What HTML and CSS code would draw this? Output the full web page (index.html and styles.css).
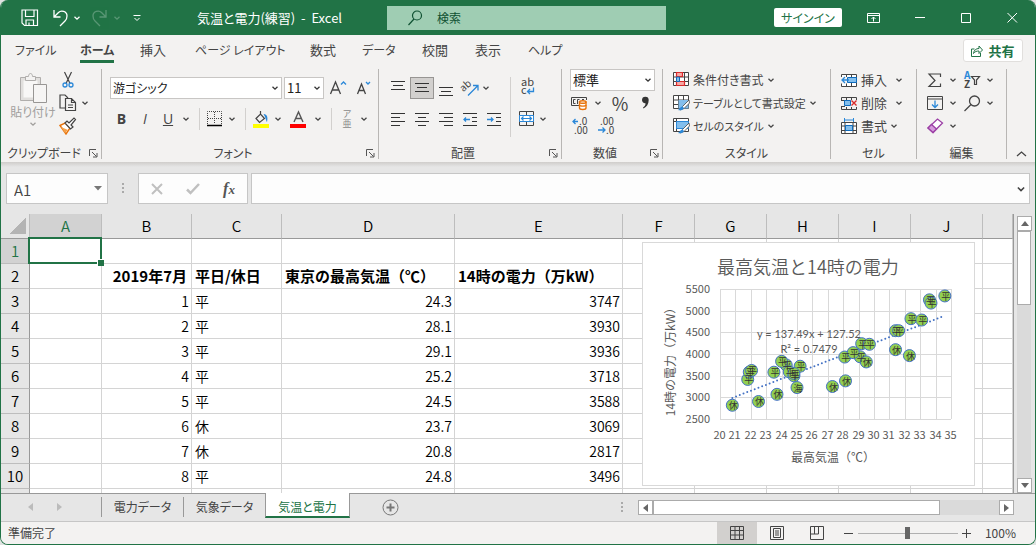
FILE: index.html
```html
<!DOCTYPE html>
<html lang="ja">
<head>
  <meta charset="UTF-8" />
  <meta name="viewport" content="width=device-width, initial-scale=1.0"/>
  <title>気温と電力(練習) - Excel</title>
  <link rel="stylesheet" href="styles.css">
</head>
<body>

<svg class="sprite" aria-hidden="true">
  <symbol id="chev" viewBox="0 0 8 8"><path d="M1.5 2.8 4 5.2 6.5 2.8" fill="none" stroke="currentColor" stroke-width="1.3"/></symbol>
  <symbol id="launch" viewBox="0 0 9 9"><path d="M.5 7V.5H7M3 3l4.5 4.5M8 4v4H4" fill="none" stroke="#555"/></symbol>
</svg>

<div class="app">
  <header class="titlebar">
    <div class="quick-access">
      <button class="tb-btn" aria-label="上書き保存"><svg width="18" height="18" viewBox="0 0 18 18" fill="none" stroke="#fff" stroke-width="1.2"><path d="M1 1h15.500v15.500H3.500L1 14zM4.500 1v6.500h8.500V1M5 16.500v-5.500h7.500v5.500M8 13.500v3"/></svg></button>
      <button class="tb-btn" aria-label="元に戻す"><svg width="18" height="18" viewBox="0 0 18 18" fill="none" stroke="#fff" stroke-width="1.300"><path d="M3 1v7h6.500M3 8l4.500-4.500C10 1 16 2 16 7c0 2.500-1 4-2 5l-5 5"/></svg></button>
      <button class="tb-drop" aria-label="元に戻す一覧"><svg width="8" height="8"><use href="#chev"/></svg></button>
      <button class="tb-btn dim" aria-label="やり直し"><svg width="18" height="18" viewBox="0 0 18 18" fill="none" stroke="#fff" stroke-width="1.300"><path d="M15 1v7H8.500M15 8l-4.500-4.500C8 1 2 2 2 7c0 2.500 1 4 2 5l5 5"/></svg></button>
      <button class="tb-drop dim" aria-label="やり直し一覧"><svg width="8" height="8"><use href="#chev"/></svg></button>
      <button class="tb-btn custom" aria-label="カスタマイズ"><svg width="8" height="8" viewBox="0 0 8 8" fill="none" stroke="#fff"><path d="M.5 1.500h7M1.500 4 4 6.500 6.500 4"/></svg></button>
    </div>
    <h1 class="doc-title">気温と電力(練習)&nbsp; -&nbsp; Excel</h1>
    <label class="search">
      <svg width="14" height="16" viewBox="0 0 14 16" fill="none" stroke="#0f5132" stroke-width="1.200"><circle cx="9" cy="5.500" r="4.500"/><path d="M6 9 .5 15"/></svg>
      <input type="text" placeholder="検索" aria-label="検索">
    </label>
    <div class="window-controls">
      <button class="sign-in">サインイン</button>
      <button class="win-btn" aria-label="リボンの表示オプション"><svg width="14" height="12" viewBox="0 0 14 12" fill="none" stroke="#fff"><path d="M.5 1.500h12v9H.5zM.5 3.500h12M6.500 9.500V5M4.500 7l2-2 2 2"/></svg></button>
      <button class="win-btn" aria-label="最小化"><svg width="11" height="11" viewBox="0 0 11 11"><path d="M0 5.500h10" stroke="#fff"/></svg></button>
      <button class="win-btn" aria-label="最大化"><svg width="11" height="11" viewBox="0 0 11 11"><path d="M.5 1.500h9v9h-9z" stroke="#fff" fill="none"/></svg></button>
      <button class="win-btn" aria-label="閉じる"><svg width="11" height="11" viewBox="0 0 11 11"><path d="M.5 1l9.500 9.500M10 1 .5 10.500" stroke="#fff"/></svg></button>
    </div>
  </header>

  <nav class="menu">
    <div class="menu-tabs">
      <a href="#" class="kana">ファイル</a>
      <a href="#" class="kana active">ホーム</a>
      <a href="#">挿入</a>
      <a href="#" class="kana">ページ レイアウト</a>
      <a href="#">数式</a>
      <a href="#" class="kana">データ</a>
      <a href="#">校閲</a>
      <a href="#">表示</a>
      <a href="#" class="kana">ヘルプ</a>
    </div>
    <button class="share"><svg width="12" height="12" viewBox="0 0 12 12" fill="none" stroke="#217346"><path d="M3.500 4H.5v7.500h9V8M2.500 8.500C3 5 5 3.500 8 3.500V1l3.500 4L8 8.500V6C5.500 6 4 6.500 2.500 8.500z"/></svg>共有</button>
  </nav>

  <section class="ribbon">
    <div class="group">
      <div class="group-body clipboard">
        <button class="paste">
          <svg width="28" height="32" viewBox="0 0 28 32" fill="none" stroke="#b0aeac"><path d="M1.500 5.500h20v23h-20z" fill="#e1dfdd"/><path d="M4.500 8.500h14v17h-14z" fill="#f8f7f6" stroke="none"/><path d="M6.500 8.500v-4h3c0-4 4-4 4 0h3v4z" fill="#f3f2f1"/><path d="M14.500 12.500h13v18h-13z" fill="#f6f5f4" stroke="#989694"/></svg>
          <span>貼り付け</span>
          <svg width="8" height="8"><use href="#chev"/></svg>
        </button>
        <div class="rows">
          <button class="tool" aria-label="切り取り"><svg width="16" height="18" viewBox="0 0 16 18" fill="none"><path d="M4.500 1 10 12.500M11.500 1 6 12.500" stroke="#444" stroke-width="1.200"/><circle cx="5" cy="14" r="2" stroke="#2b88d8" stroke-width="1.300"/><circle cx="11" cy="14" r="2" stroke="#2b88d8" stroke-width="1.300"/></svg></button><i></i>
          <button class="tool" aria-label="コピー"><svg width="18" height="18" viewBox="0 0 18 18" fill="none" stroke="#444" stroke-width="1.200"><path d="M6 14H1V1h5l3 3M6.500 4.500h6l4 4v8h-10zM12.500 4.500v4h4M9 11h5M9 13.500h5"/></svg></button>
          <button class="drop" aria-label="コピーのオプション"><svg width="8" height="8"><use href="#chev"/></svg></button>
          <button class="tool" aria-label="書式のコピー"><svg width="18" height="18" viewBox="0 0 18 18"><path d="M1 8.500 6 6l5 5-4 6z" fill="#fff" stroke="#e8740c" stroke-width="1.400"/><path d="M2 10l7 3-3 3z" fill="#f4a14a"/><path d="M6 6l2-2 2 2 5-5 1.500 1.500L12 8l2 2-2.500 2z" fill="#fff" stroke="#444" stroke-width="1.200"/></svg></button>
        </div>
      </div>
      <div class="group-label kana">クリップボード<button class="launcher" aria-label="クリップボードの設定"><svg width="9" height="9"><use href="#launch"/></svg></button></div>
    </div>

    <div class="group">
      <div class="group-body font">
        <div class="font-pick">
          <select class="font-name" aria-label="フォント名"><option>游ゴシック</option></select>
          <select class="font-size" aria-label="フォントサイズ"><option>11</option></select>
          <button class="tool" aria-label="拡大"><svg width="18" height="16" viewBox="0 0 18 16" fill="none"><path d="M1.500 14 6.500 2l5 12M3.200 10h6.600" stroke="#444" stroke-width="1.300"/><path d="M12 4.500l2.500-2.500L17 4.500" stroke="#2b88d8" stroke-width="1.300"/></svg></button>
          <button class="tool" aria-label="縮小"><svg width="16" height="16" viewBox="0 0 16 16" fill="none"><path d="M1.500 14 5.500 4l4 10M3 10.500h5" stroke="#444" stroke-width="1.300"/><path d="M10 2l2 2 2-2" stroke="#2b88d8" stroke-width="1.300"/></svg></button>
        </div>
        <div class="font-style">
          <button class="tool letter bold">B</button>
          <button class="tool letter italic">I</button>
          <button class="tool letter underline">U</button>
          <button class="drop" aria-label="下線の種類"><svg width="8" height="8"><use href="#chev"/></svg></button>
          <span class="sep"></span>
          <button class="tool" aria-label="罫線"><svg width="16" height="16" viewBox="0 0 16 16" fill="none" stroke="#444"><path d="M.5 13V.5h14V13M7.500 1v12M1 7.500h13" stroke-dasharray="1 1"/><path d="M0 14.500h15" stroke="#000" stroke-width="1.500"/></svg></button>
          <button class="drop" aria-label="罫線の種類"><svg width="8" height="8"><use href="#chev"/></svg></button>
          <span class="sep"></span>
          <button class="tool" aria-label="塗りつぶし"><svg width="17" height="17" viewBox="0 0 17 17" fill="none"><path d="M7.500 0v3.500M3 7.500 7.500 3l4 4.500-5 4z" stroke="#444" stroke-width="1.200"/><path d="M10.500 3c4 0 4.500 4 3.500 8-1-1-1-4-3.500-8z" fill="#2b88d8"/><path d="M0 13h16v4H0z" fill="#ff0"/></svg></button>
          <button class="drop" aria-label="塗りつぶしの色"><svg width="8" height="8"><use href="#chev"/></svg></button>
          <button class="tool" aria-label="フォントの色"><svg width="17" height="17" viewBox="0 0 17 17" fill="none"><path d="M4 11 8.500 1 13 11M5.500 7.500h6" stroke="#555" stroke-width="1.400"/><path d="M0 13h16v4H0z" fill="red"/></svg></button>
          <button class="drop" aria-label="フォントの色一覧"><svg width="8" height="8"><use href="#chev"/></svg></button>
          <span class="sep"></span>
          <button class="tool ruby"><span>ア</span><span>亜</span></button>
          <button class="drop" aria-label="ふりがな"><svg width="8" height="8"><use href="#chev"/></svg></button>
        </div>
      </div>
      <div class="group-label kana">フォント<button class="launcher" aria-label="フォントの設定"><svg width="9" height="9"><use href="#launch"/></svg></button></div>
    </div>

    <div class="group">
      <div class="group-body align">
        <button class="tool" aria-label="上揃え"><svg width="14" height="16" viewBox="0 0 14 16" stroke="#333"><path d="M0 1.500h14M2 5.500h10M0 9.500h14"/></svg></button>
        <button class="tool pressed" aria-label="上下中央揃え"><svg width="14" height="16" viewBox="0 0 14 16" stroke="#333"><path d="M0 3.500h14M2 7.500h10M0 11.500h14"/></svg></button>
        <button class="tool" aria-label="下揃え"><svg width="14" height="16" viewBox="0 0 14 16" stroke="#333"><path d="M0 7.500h14M2 11.500h10M0 15.500h14"/></svg></button>
        <button class="tool" aria-label="方向"><svg width="17" height="17" viewBox="0 0 17 17"><text x="0" y="9" font-size="10" fill="#444" transform="rotate(-42 5 9)">ab</text><path d="M6 15.500 15.500 6M11 5.500h5v5" fill="none" stroke="#2b88d8" stroke-width="1.300"/></svg></button>
        <button class="drop" aria-label="方向の種類"><svg width="8" height="8"><use href="#chev"/></svg></button>
        <span class="sep tall"></span>
        <button class="tool wrap" aria-label="折り返して全体を表示する"><svg width="16" height="18" viewBox="0 0 16 18"><text x="2" y="7" font-size="11" fill="#444">ab</text><text x="2" y="15" font-size="11" fill="#444">c</text><path d="M14.500 8.500v4H8.500M11 10l-2.500 2.500L11 15" fill="none" stroke="#2b88d8" stroke-width="1.300"/></svg></button>
        <button class="tool second-row" aria-label="左揃え"><svg width="14" height="15" viewBox="0 0 14 15" stroke="#333"><path d="M0 1.500h14M0 5.500h9M0 9.500h14M0 13.500h9"/></svg></button>
        <button class="tool center" aria-label="中央揃え"><svg width="14" height="15" viewBox="0 0 14 15" stroke="#333"><path d="M0 1.500h14M3 5.500h8M0 9.500h14M3 13.500h8"/></svg></button>
        <button class="tool" aria-label="右揃え"><svg width="14" height="15" viewBox="0 0 14 15" stroke="#333"><path d="M0 1.500h14M5 5.500h9M0 9.500h14M5 13.500h9"/></svg></button>
        <button class="tool" aria-label="インデントを減らす"><svg width="15" height="15" viewBox="0 0 15 15" fill="none"><path d="M0 1.500h14M9 5.500h5M9 9.500h5M0 13.500h14" stroke="#333"/><path d="M1 7.500h6M3 5.500l-2 2 2 2" stroke="#2b88d8" stroke-width="1.300"/></svg></button>
        <button class="tool" aria-label="インデントを増やす"><svg width="15" height="15" viewBox="0 0 15 15" fill="none"><path d="M0 1.500h14M9 5.500h5M9 9.500h5M0 13.500h14" stroke="#333"/><path d="M0 7.500h6M4 5.500l2 2-2 2" stroke="#2b88d8" stroke-width="1.300"/></svg></button>
        <button class="tool merge" aria-label="セルを結合して中央揃え"><svg width="16" height="16" viewBox="0 0 16 16" fill="none"><path d="M.5.5h14v14H.5zM7.500 0v4M7.500 11v4" stroke="#444"/><path d="M.5 4.500h14v6H.5z" fill="#fff" stroke="#2b88d8"/><path d="M2.500 7.500h10M4.500 5.500l-2 2 2 2M10.500 5.500l2 2-2 2" stroke="#2b88d8" stroke-width="1.200"/></svg></button>
        <button class="drop" aria-label="結合の種類"><svg width="8" height="8"><use href="#chev"/></svg></button>
      </div>
      <div class="group-label">配置<button class="launcher" aria-label="配置の設定"><svg width="9" height="9"><use href="#launch"/></svg></button></div>
    </div>

    <div class="group">
      <div class="group-body number">
        <select aria-label="表示形式"><option>標準</option></select>
        <div class="num-row">
          <button class="tool" aria-label="通貨表示形式"><svg width="18" height="16" viewBox="0 0 18 16" fill="none"><path d="M8 10.500H.5v-8h15V5" stroke="#444"/><path d="M4.500 4.500H2.500v4h2M6.500 9V4.500h2M11 4.500h2" stroke="#444"/><path d="M8.500 7v6c0 2 6.500 2 6.500 0V7z" fill="#fff" stroke="#e8740c" stroke-width="1.400"/><ellipse cx="11.700" cy="7" rx="3.200" ry="1.300" fill="#fff" stroke="#e8740c" stroke-width="1.400"/><path d="M8.500 10c0 1.500 6.500 1.500 6.500 0" stroke="#e8740c" stroke-width="1.400"/></svg></button>
          <button class="drop" aria-label="通貨の種類"><svg width="8" height="8"><use href="#chev"/></svg></button>
          <button class="tool percent">%</button>
          <button class="tool" aria-label="桁区切り"><svg width="9" height="14" viewBox="0 0 9 14"><path d="M1 4a3.300 3.300 0 0 1 6.700 0c0 4-2 7-5.200 8.500L2 11.500c2-1.500 2.500-2.500 2.500-4.200C2.500 7.500 1 6 1 4z" fill="#333"/></svg></button>
        </div>
        <div class="num-row wide">
          <button class="tool" aria-label="小数点以下の表示桁数を増やす"><svg width="18" height="18" viewBox="0 0 18 18"><text x="7" y="8" font-size="10" fill="#444">.0</text><text x="2" y="17" font-size="10" fill="#444">.00</text><path d="M6 4.500H1M3.500 2 1 4.500 3.500 7" fill="none" stroke="#2b88d8" stroke-width="1.300"/></svg></button>
          <button class="tool" aria-label="小数点以下の表示桁数を減らす"><svg width="18" height="18" viewBox="0 0 18 18"><text x="3" y="8" font-size="10" fill="#444">.00</text><text x="9" y="17" font-size="10" fill="#444">.0</text><path d="M1 13h7M5.500 10.500 8 13l-2.500 2.500" fill="none" stroke="#2b88d8" stroke-width="1.300"/></svg></button>
        </div>
      </div>
      <div class="group-label">数値<button class="launcher" aria-label="数値の設定"><svg width="9" height="9"><use href="#launch"/></svg></button></div>
    </div>

    <div class="group">
      <div class="group-body styles">
        <button class="text-tool"><svg width="17" height="16" viewBox="0 0 17 16"><path d="M.5.500h15v13H.5zM0 5h16M0 9.500h16M3.500 0v14M11.500 0v14" fill="#fff" stroke="#444"/><path d="M3.500.500h6v4h-6zM3.500 9.500h8v4h-8z" fill="#f7a8a4" stroke="#d92c2c" stroke-width="1.200"/><path d="M3.500 5h3v4.500h-3z" fill="#83beec" stroke="#0f6cbd"/></svg>条件付き書式<svg width="8" height="8"><use href="#chev"/></svg></button>
        <button class="text-tool long"><svg width="17" height="16" viewBox="0 0 17 16"><path d="M.5.500h15v13H.5zM0 5h16M0 9.500h16M5.500 0v14M10.500 0v14" fill="#fff" stroke="#444"/><path d="M5.500 5h10v8.500h-10z" fill="#83beec"/><path d="M16 5 9.500 11.500 7 15l4-1.500L16.500 8z" fill="#fff" stroke="#444" stroke-width=".8"/><path d="M9.500 11.500 11 13c-1 2.500-4 2.500-6 2 2-1 2-3 4.500-3.500z" fill="#2b88d8"/></svg>テーブルとして書式設定<svg width="8" height="8"><use href="#chev"/></svg></button>
        <button class="text-tool long"><svg width="17" height="16" viewBox="0 0 17 16"><path d="M.5.500h15v13H.5zM0 3.500h16M3.500 0v14" fill="#fff" stroke="#444"/><path d="M3.500 3.500h12v7h-12z" fill="#83beec" stroke="#2b88d8"/><path d="M16 5 9.500 11.500 7 15l4-1.500L16.500 8z" fill="#fff" stroke="#444" stroke-width=".8"/><path d="M9.500 11.500 11 13c-1 2.500-4 2.500-6 2 2-1 2-3 4.500-3.500z" fill="#2b88d8"/></svg>セルのスタイル<svg width="8" height="8"><use href="#chev"/></svg></button>
      </div>
      <div class="group-label kana">スタイル</div>
    </div>

    <div class="group">
      <div class="group-body cells">
        <button class="text-tool"><svg width="17" height="15" viewBox="0 0 17 15"><path d="M.5 1.500h15v12H.5zM5.500 1v13M10.500 1v13" fill="#fff" stroke="#444"/><path d="M6.500 4.500h9v5h-9z" fill="#83beec" stroke="#0f6cbd"/><path d="M0 4h6v6.500H0z" fill="#f3f2f1"/><path d="M8 7H1M4 4 1 7l3 3" fill="none" stroke="#2b88d8" stroke-width="1.300"/></svg>挿入<svg width="8" height="8"><use href="#chev"/></svg></button>
        <button class="text-tool"><svg width="17" height="15" viewBox="0 0 17 15"><path d="M.5 4V1.500h15V4M.5 11v2.500h15V11M5.500 1v3M10.500 1v3M5.500 11v3M10.500 11v3M0 4.500h4M0 10.500h4" fill="none" stroke="#444"/><path d="M3.500 4.500h6v5h-6z" fill="#83beec" stroke="#0f6cbd"/><path d="M10.500 4.500l5 5M15.500 4.500l-5 5" stroke="#d92c2c" stroke-width="1.400"/></svg>削除<svg width="8" height="8"><use href="#chev"/></svg></button>
        <button class="text-tool near"><svg width="17" height="17" viewBox="0 0 17 17"><path d="M.5 4.500h15v11H.5zM4 4v12M12 4v12M0 8h16M0 12.500h16" fill="#fff" stroke="#444"/><path d="M4.500 7.500h7v5h-7z" fill="#83beec" stroke="#0f6cbd"/><path d="M3.500 0v4M12.500 0v4M4 2h8" stroke="#2b88d8"/></svg>書式<svg width="8" height="8"><use href="#chev"/></svg></button>
      </div>
      <div class="group-label kana">セル</div>
    </div>

    <div class="group">
      <div class="group-body edit">
        <button class="tool" aria-label="オート SUM"><svg width="14" height="15" viewBox="0 0 14 15"><path d="M12.500 4V1H1l6 6.500L1 13.500h11.500v-3" fill="none" stroke="#444" stroke-width="1.200"/></svg></button>
        <button class="drop" aria-label="集計の種類"><svg width="8" height="8"><use href="#chev"/></svg></button>
        <button class="tool" aria-label="並べ替えとフィルター"><svg width="18" height="18" viewBox="0 0 18 18"><text x="1" y="8" font-size="10" font-weight="700" fill="#2b88d8">A</text><text x="1" y="17" font-size="10" font-weight="700" fill="#444">Z</text><path d="M8.500 5.500h8L13.500 9v4.500h-2V9z" fill="none" stroke="#444" stroke-width="1.200"/></svg></button>
        <button class="drop" aria-label="並べ替えの種類"><svg width="8" height="8"><use href="#chev"/></svg></button>
        <button class="tool" aria-label="フィル"><svg width="16" height="14" viewBox="0 0 16 14"><path d="M.5.500h15v13H.5zM.5 3h15" fill="none" stroke="#444"/><path d="M8 4.500v7M5 8.500l3 3 3-3" fill="none" stroke="#2b88d8" stroke-width="1.300"/></svg></button>
        <button class="drop" aria-label="フィルの種類"><svg width="8" height="8"><use href="#chev"/></svg></button>
        <button class="tool" aria-label="検索と選択"><svg width="17" height="17" viewBox="0 0 17 17" fill="none" stroke="#444" stroke-width="1.300"><circle cx="10.500" cy="6" r="5"/><path d="M7 9.500.5 16"/></svg></button>
        <button class="drop" aria-label="検索の種類"><svg width="8" height="8"><use href="#chev"/></svg></button>
        <button class="tool" aria-label="クリア"><svg width="17" height="16" viewBox="0 0 17 16"><path d="M1 10 10.500 1l5 4-9.500 9.500z" fill="#fff" stroke="#9b3fa5" stroke-width="1.300"/><path d="M1 10l3.500-3.500L9.500 11 6 14.500z" fill="#d59bdc" stroke="#9b3fa5" stroke-width="1.300"/></svg></button>
        <button class="drop" aria-label="クリアの種類"><svg width="8" height="8"><use href="#chev"/></svg></button>
      </div>
      <div class="group-label">編集</div>
    </div>
    <button class="collapse" aria-label="リボンを折りたたむ"><svg width="11" height="8" viewBox="0 0 11 8"><path d="M1 6l4.500-4L10 6" fill="none" stroke="#444" stroke-width="1.300"/></svg></button>
  </section>

  <section class="formula-bar">
    <label class="name-box"><input type="text" value="A1" aria-label="名前ボックス"><svg width="8" height="5" viewBox="0 0 8 5"><path d="M0 0h8L4 4.500z" fill="#777"/></svg></label>
    <span class="dots"></span>
    <div class="fx-buttons">
      <button aria-label="キャンセル"><svg width="12" height="12" viewBox="0 0 12 12"><path d="M1 1l10 10M11 1 1 11" stroke="#c0c0c0" stroke-width="2"/></svg></button>
      <button aria-label="入力"><svg width="14" height="12" viewBox="0 0 14 12"><path d="M1 6.500 4.500 10 13 1" fill="none" stroke="#c0c0c0" stroke-width="2.500"/></svg></button>
      <button class="fx" aria-label="関数の挿入">f<small>x</small></button>
    </div>
    <label class="formula"><input type="text" aria-label="数式バー"><svg width="10" height="10"><use href="#chev"/></svg></label>
  </section>

  <main class="workspace">
    <div class="sheet">
      <table>
        <colgroup>
          <col class="c-head"><col class="c-72"><col class="c-90"><col class="c-90"><col class="c-173"><col class="c-168">
          <col class="c-72"><col class="c-72"><col class="c-72"><col class="c-72"><col class="c-72"><col>
        </colgroup>
        <thead>
          <tr><th class="corner"></th><th class="sel">A</th><th>B</th><th>C</th><th>D</th><th>E</th><th>F</th><th>G</th><th>H</th><th>I</th><th>J</th><th></th></tr>
        </thead>
        <tbody>
          <tr><th class="sel">1</th><td class="cursor"></td><td></td><td></td><td></td><td></td><td></td><td></td><td></td><td></td><td></td><td></td></tr>
          <tr class="heading"><th>2</th><td></td><td class="date">2019年7月</td><td>平日/休日</td><td>東京の最高気温（℃）</td><td>14時の電力（万kW）</td><td></td><td></td><td></td><td></td><td></td><td></td></tr>
          <tr><th>3</th><td></td><td class="num">1</td><td>平</td><td class="num">24.3</td><td class="num">3747</td><td></td><td></td><td></td><td></td><td></td><td></td></tr>
          <tr><th>4</th><td></td><td class="num">2</td><td>平</td><td class="num">28.1</td><td class="num">3930</td><td></td><td></td><td></td><td></td><td></td><td></td></tr>
          <tr><th>5</th><td></td><td class="num">3</td><td>平</td><td class="num">29.1</td><td class="num">3936</td><td></td><td></td><td></td><td></td><td></td><td></td></tr>
          <tr><th>6</th><td></td><td class="num">4</td><td>平</td><td class="num">25.2</td><td class="num">3718</td><td></td><td></td><td></td><td></td><td></td><td></td></tr>
          <tr><th>7</th><td></td><td class="num">5</td><td>平</td><td class="num">24.5</td><td class="num">3588</td><td></td><td></td><td></td><td></td><td></td><td></td></tr>
          <tr><th>8</th><td></td><td class="num">6</td><td>休</td><td class="num">23.7</td><td class="num">3069</td><td></td><td></td><td></td><td></td><td></td><td></td></tr>
          <tr><th>9</th><td></td><td class="num">7</td><td>休</td><td class="num">20.8</td><td class="num">2817</td><td></td><td></td><td></td><td></td><td></td><td></td></tr>
          <tr><th>10</th><td></td><td class="num">8</td><td>平</td><td class="num">24.8</td><td class="num">3496</td><td></td><td></td><td></td><td></td><td></td><td></td></tr>
          <tr><th></th><td></td><td></td><td></td><td></td><td></td><td></td><td></td><td></td><td></td><td></td><td></td></tr>
        </tbody>
      </table>
      <figure class="chart">
        <svg id="scatter" width="331" height="242" viewBox="0 0 331 242" role="img" aria-label="最高気温と14時の電力"></svg>
      </figure>
    </div>
    <div class="v-scroll">
      <button aria-label="上へ"><svg width="8" height="5" viewBox="0 0 8 5"><path d="M0 5h8L4 0z" fill="#666"/></svg></button>
      <div class="v-track"><div class="v-thumb"></div></div>
      <button aria-label="下へ"><svg width="8" height="5" viewBox="0 0 8 5"><path d="M0 0h8L4 5z" fill="#666"/></svg></button>
    </div>
  </main>

  <nav class="sheet-bar">
    <div class="sheet-nav">
      <button aria-label="前のシート"><svg width="5" height="8" viewBox="0 0 5 8"><path d="M5 0v8L0 4z" fill="#bbb"/></svg></button>
      <button aria-label="次のシート"><svg width="5" height="8" viewBox="0 0 5 8"><path d="M0 0v8l5-4z" fill="#bbb"/></svg></button>
    </div>
    <a href="#" class="sheet-tab">電力データ</a>
    <a href="#" class="sheet-tab">気象データ</a>
    <a href="#" class="sheet-tab active">気温と電力</a>
    <button class="add-sheet" aria-label="新しいシート"><svg width="17" height="17" viewBox="0 0 17 17" fill="none" stroke="#777"><circle cx="8.500" cy="8.500" r="7.500"/><path d="M8.500 4.500v8M4.500 8.500h8" stroke-width="2"/></svg></button>
    <span class="dots"></span>
    <div class="h-scroll">
      <button aria-label="左へ"><svg width="5" height="8" viewBox="0 0 5 8"><path d="M5 0v8L0 4z" fill="#666"/></svg></button>
      <div class="h-track"><div class="h-thumb"></div></div>
      <button aria-label="右へ"><svg width="5" height="8" viewBox="0 0 5 8"><path d="M0 0v8l5-4z" fill="#666"/></svg></button>
    </div>
  </nav>

  <footer class="status">
    <span class="ready">準備完了</span>
    <div class="views">
      <button class="view active" aria-label="標準"><svg width="14" height="14" viewBox="0 0 14 14" fill="none" stroke="#444"><path d="M.5.500h13v13H.5zM.5 4.500h13M.5 9h13M5 .5v13M9.500.5v13"/></svg></button>
      <button class="view" aria-label="ページ レイアウト"><svg width="14" height="14" viewBox="0 0 14 14" fill="none" stroke="#444"><path d="M.5.500h13v13H.5zM3.500 2.500h7v9h-7zM5 5h4M5 7h4M5 9h4"/></svg></button>
      <button class="view" aria-label="改ページ プレビュー"><svg width="14" height="14" viewBox="0 0 14 14" fill="none" stroke="#444"><path d="M.5.500h13v13H.5zM.5 8h8V.5M4.500.5V8"/></svg></button>
    </div>
    <button class="zoom-btn" aria-label="縮小"><svg width="9" height="9" viewBox="0 0 9 9"><path d="M0 4.500h9" stroke="#444"/></svg></button>
    <input type="range" min="0" max="100" value="50" aria-label="ズーム">
    <button class="zoom-btn" aria-label="拡大"><svg width="9" height="9" viewBox="0 0 9 9"><path d="M0 4.500h9M4.500 0v9" stroke="#444"/></svg></button>
    <span class="zoom-value">100%</span>
  </footer>
</div>

<script src="chart.js"></script>
</body>
</html>
```
FILE: styles.css
```css
* {
  box-sizing: border-box;
}

body {
  margin: 0;
  background-color: #dfe3e1;
  color: #444;
  font-family: "Noto Sans CJK JP", "Noto Sans", sans-serif;
  font-size: 13px;
  line-height: 16px;
}

button,
input,
select {
  font: inherit;
  color: inherit;
  margin: 0;
  padding: 0;
  border: 0;
  background: none;
}

a {
  color: inherit;
  text-decoration: none;
}

svg {
  display: block;
  flex: none;
  overflow: visible;
}

.sprite {
  position: absolute;
  width: 0;
  height: 0;
}

.kana {
  font-size: 12px;
  font-feature-settings: "palt";
}

.app {
  display: flex;
  flex-direction: column;
  height: 100vh;
  border: 1px solid #217346;
  border-top: 0;
  border-radius: 8px;
  overflow: hidden;
  background-color: #e6e6e6;
}

/* title bar */
.titlebar {
  display: flex;
  align-items: center;
  flex: none;
  height: 35px;
  background-color: #217346;
  color: #fff;
}

.quick-access {
  display: flex;
  align-items: center;
  width: 196px;
  padding-left: 18px;
}

.tb-btn,
.tb-drop {
  display: grid;
  place-items: center;
  height: 24px;
}

.tb-btn {
  width: 22px;
}

.tb-btn + .tb-btn {
  margin-left: 8px;
}

.tb-drop {
  width: 12px;
  margin-right: 6px;
}

.custom {
  width: 16px;
}

.dim {
  opacity: 0.25;
}

.doc-title {
  width: 190px;
  margin: 0;
  font-size: 13px;
  font-weight: 400;
  white-space: nowrap;
  font-feature-settings: "palt";
}

.search {
  display: flex;
  align-items: center;
  flex: 0 1 279px;
  gap: 15px;
  height: 24px;
  padding-left: 21px;
  background-color: #9fcdb3;
}

.search input {
  width: 100%;
  min-width: 0;
}

.search input::placeholder {
  color: #0f5132;
  opacity: 1;
  font-size: 12px;
}

.window-controls {
  display: flex;
  align-items: center;
  margin-left: auto;
}

.sign-in {
  width: 68px;
  height: 19px;
  margin-right: 9px;
  border-radius: 2px;
  background-color: #fff;
  color: #217346;
  font-size: 12px;
  font-feature-settings: "palt";
}

.win-btn {
  display: grid;
  place-items: center;
  width: 46px;
  height: 34px;
}

/* menu tabs */
.menu {
  display: flex;
  align-items: flex-start;
  justify-content: space-between;
  flex: none;
  height: 34px;
  padding: 3px 8px 0 14px;
  background-color: #f3f2f1;
}

.menu-tabs {
  display: grid;
  grid-template-columns: 65px 60px 55px 115px 52px 60px 53px 53px auto;
}

.menu-tabs a {
  justify-self: start;
  height: 25px;
  padding-top: 3px;
  line-height: 18px;
  border-bottom: 3px solid transparent;
  white-space: nowrap;
}

.menu-tabs .active {
  font-weight: 700;
  border-color: #217346;
}

.share {
  display: flex;
  align-items: center;
  justify-content: center;
  gap: 5px;
  width: 60px;
  height: 23px;
  margin: 1px 4px 0;
  border: 1px solid #e1dfdd;
  border-radius: 3px;
  background-color: #fff;
  color: #217346;
  font-weight: 700;
}

/* ribbon */
.ribbon {
  display: grid;
  grid-template-columns: 101px 277px 183px 101px 168px 86px 90px 1fr;
  flex: none;
  height: 93px;
  background-color: #f3f2f1;
}

.group {
  display: flex;
  flex-direction: column;
  height: 90px;
  border-right: 1px solid #b8b6b4;
}

.group-body {
  height: 78px;
}

.group-label {
  display: grid;
  grid-template-columns: 1fr 14px;
  align-items: center;
  height: 12px;
  line-height: 12px;
  font-size: 12px;
  text-align: center;
}

.launcher {
  padding-left: 2px;
}

.tool,
.drop {
  display: grid;
  place-items: center;
  height: 22px;
}

.sep {
  justify-self: center;
  width: 1px;
  height: 22px;
  background-color: #d2d0ce;
}

.clipboard {
  display: flex;
}

.paste {
  display: flex;
  flex-direction: column;
  align-items: center;
  width: 52px;
  margin-left: 6px;
  padding-top: 3px;
  font-size: 12px;
  color: #a19f9d;
  font-feature-settings: "palt";
}

.rows {
  display: grid;
  grid-template-columns: 18px 16px;
  grid-auto-rows: 22px;
  align-content: start;
  gap: 1px 0;
}

.font {
  padding: 8px 0 0 8px;
}

.font-pick {
  display: grid;
  grid-template-columns: 172px 40px 24px 24px;
  gap: 2px;
}

.font-style {
  display: grid;
  grid-template-columns: 23px 24px 22px 14px 12px 20px 14px 12px 20px 14px 26px 14px 12px 20px 14px;
  margin-top: 9px;
}

select {
  appearance: none;
  height: 22px;
  padding: 0 18px 0 2px;
  border: 1px solid #c8c6c4;
  background: #fff url("data:image/svg+xml,%3Csvg xmlns='http://www.w3.org/2000/svg' width='8' height='8'%3E%3Cpath d='M1.500 2.800 4 5.200 6.500 2.800' fill='none' stroke='%23333' stroke-width='1.300'/%3E%3C/svg%3E") no-repeat right 2px center;
  color: #222;
  font-feature-settings: "palt";
}

.font-name {
  font-size: 12px;
}

.letter {
  font-family: "Open Sans", "Noto Sans", sans-serif;
  font-size: 14px;
}

.bold {
  font-weight: 700;
}

.italic {
  font-style: italic;
}

.underline {
  text-decoration: underline;
}

.ruby {
  align-content: center;
  font-size: 9px;
  line-height: 10px;
  color: #888;
}

.align {
  display: grid;
  grid-template-columns: 24px 24px 24px 24px 24px 9px 24px 10px;
  grid-template-rows: 22px 22px;
  row-gap: 9px;
  padding: 8px 0 0 7px;
}

.align .drop {
  justify-self: start;
}

.align .pressed {
  border: 1px solid #979593;
  background-color: #d2d0ce;
}

.tall {
  grid-column: 6;
  grid-row: 1 / 3;
  height: 60px;
}

.second-row {
  grid-column: 1;
}

.center {
  grid-column: 2;
}

.wrap,
.merge {
  grid-column: 7;
}

.number {
  display: grid;
  align-content: start;
  gap: 1px;
  padding-left: 8px;
}

.number select {
  width: 85px;
}

.num-row {
  display: grid;
  grid-template-columns: 20px 16px 28px 22px;
}

.num-row.wide {
  grid-template-columns: 22px 28px;
}

.percent {
  font-size: 18px;
}

.styles,
.cells {
  display: grid;
  align-content: start;
  justify-items: start;
  gap: 1px;
  padding-left: 10px;
}

.text-tool {
  display: flex;
  align-items: center;
  gap: 3px;
  height: 22px;
  white-space: nowrap;
  font-feature-settings: "palt";
}

.styles .text-tool {
  font-size: 12px;
}

.styles .long {
  font-size: 11px;
}

.cells .text-tool svg:last-child {
  margin-left: 5px;
}

.cells .near svg:last-child {
  margin-left: 0;
}

.edit {
  display: grid;
  grid-template-columns: 24px 12px 26px 10px;
  grid-auto-rows: 22px;
  align-content: start;
  gap: 1px 0;
  padding-left: 6px;
}

.styles + .group-label,
.cells + .group-label,
.edit + .group-label {
  grid-template-columns: 1fr;
}

.collapse {
  display: grid;
  place-items: center;
  align-self: end;
  height: 16px;
}

/* formula bar */
.formula-bar {
  display: flex;
  flex: none;
  height: 52px;
  padding: 11px 5px 10px;
  background: linear-gradient(#cfcdcb, #e6e6e6 5px);
}

.name-box,
.formula,
.fx-buttons {
  display: flex;
  align-items: center;
  height: 31px;
  border: 1px solid #c6c6c6;
  background-color: #fdfdfd;
}

.name-box {
  width: 102px;
  padding: 0 5px 0 7px;
}

.name-box input {
  width: 80px;
  margin-top: 3px;
  font-size: 15px;
  font-weight: 350;
}

.dots {
  align-self: center;
  width: 2px;
  height: 11px;
  background: repeating-linear-gradient(#aaa 0 2px, transparent 2px 4px);
}

.formula-bar .dots {
  margin: 0 14px;
}

.fx-buttons {
  width: 110px;
  margin-right: 3px;
}

.fx-buttons button {
  display: grid;
  place-items: center;
  flex: 1;
  height: 24px;
}

.fx-buttons .fx {
  display: block;
  color: #555;
  font: italic 700 16px "Liberation Serif", serif;
}

.fx small {
  font-size: 13px;
}

.formula {
  flex: 1;
  padding-right: 3px;
}

.formula input {
  flex: 1;
  min-width: 0;
}

/* grid */
.workspace {
  display: flex;
  flex: 1;
  min-height: 0;
}

.sheet {
  position: relative;
  flex: 1;
  overflow: hidden;
  border-right: 1px solid #999;
}

table {
  width: 100%;
  table-layout: fixed;
  border-spacing: 0;
  background-color: #fff;
  color: #000;
  font-size: 14px;
  font-weight: 350;
}

.c-head { width: 29px; }
.c-72 { width: 72px; }
.c-90 { width: 90px; }
.c-168 { width: 168px; }
.c-173 { width: 173px; }

th,
td {
  height: 25px;
  padding: 0;
  white-space: nowrap;
  line-height: 20px;
}

th {
  background-color: #e6e6e6;
  border-right: 1px solid #bdbdbd;
  border-bottom: 1px solid #999;
  font-size: 15px;
  font-weight: 350;
}

tbody th {
  border-right-color: #999;
  border-bottom-color: #bdbdbd;
}

th.sel {
  background-color: #d2d2d2;
  color: #217346;
}

.corner {
  background: linear-gradient(135deg, transparent 50%, #b4b4b4 50%) 9px 4px / 16px 16px no-repeat #e6e6e6;
}

td {
  padding: 0 3px;
  border-right: 1px solid #d4d4d4;
  border-bottom: 1px solid #d4d4d4;
}

.num {
  padding-right: 2px;
  text-align: right;
}

.date {
  padding-right: 4px;
  text-align: right;
}

.heading td {
  font-size: 15px;
  font-weight: 700;
}

.cursor {
  position: relative;
}

.cursor::before {
  content: "";
  position: absolute;
  inset: -2px -1px -1px -2px;
  border: 2px solid #217346;
}

.cursor::after {
  content: "";
  position: absolute;
  right: -3px;
  bottom: -3px;
  width: 6px;
  height: 6px;
  border: 1px solid #fff;
  border-right: 0;
  border-bottom: 0;
  background-color: #217346;
}

/* floats over the cells */
.chart {
  position: absolute;
  left: 641px;
  top: 28px;
  margin: 0;
  border: 1px solid #d9d9d9;
  background-color: #fff;
}

.chart text {
  fill: #595959;
  font-size: 11px;
}

.chart .chart-title {
  font-size: 18px;
  font-weight: 350;
}

.chart .axis-title {
  font-size: 12px;
}

.chart .equation {
  font-family: Lato, sans-serif;
}

.chart .point-label {
  font-size: 9px;
  fill: #333;
}

.grid-line {
  stroke: #d9d9d9;
}

.trend {
  stroke: #4472c4;
  stroke-width: 2;
  stroke-dasharray: 0 4;
  stroke-linecap: round;
}

.point {
  fill: #92d050;
  stroke: #4472c4;
}

.v-scroll {
  display: flex;
  flex-direction: column;
  width: 21px;
  padding: 2px 4px 0 3px;
}

.v-scroll button,
.h-scroll button {
  display: grid;
  place-items: center;
  flex: none;
  width: 15px;
  height: 15px;
  border: 1px solid #ababab;
  background-color: #fff;
}

.v-track,
.h-track {
  flex: 1;
  background-color: #dadada;
}

.v-thumb {
  height: 30%;
  border: 1px solid #ababab;
  background-color: #fff;
}

/* sheet tabs */
.sheet-bar {
  display: flex;
  align-items: flex-start;
  flex: none;
  height: 28px;
  border-top: 1px solid #999;
}

.sheet-nav {
  display: flex;
  align-items: center;
  gap: 24px;
  width: 100px;
  height: 26px;
  padding-left: 27px;
}

.sheet-tab {
  width: 82px;
  height: 20px;
  margin-top: 3px;
  border-left: 1px solid #999;
  line-height: 19px;
  font-size: 12px;
  text-align: center;
  font-feature-settings: "palt";
}

.sheet-tab.active {
  width: 85px;
  height: 25px;
  margin-top: -1px;
  padding-top: 4px;
  border-right: 1px solid #999;
  border-bottom: 2px solid #217346;
  background-color: #fff;
  color: #217346;
}

.add-sheet {
  margin: 5px auto 0 32px;
}

.sheet-bar .dots {
  height: 10px;
  margin: 8px 15px 0 0;
  align-self: flex-start;
}

.h-scroll {
  display: flex;
  flex: 0 0 376px;
  margin: 6px 21px 0 0;
}

.h-thumb {
  width: 83%;
  height: 15px;
  border: 1px solid #ababab;
  background-color: #fff;
}

/* status bar */
.status {
  display: flex;
  align-items: center;
  flex: none;
  height: 23px;
  padding-right: 19px;
  border-top: 1px solid #c6c6c6;
  background-color: #f3f2f1;
  font-size: 12px;
}

.ready {
  margin: 0 auto 0 7px;
}

.views {
  display: flex;
  margin-right: 3px;
}

.view {
  display: grid;
  place-items: center;
  width: 40px;
  height: 22px;
}

.view.active {
  background-color: #d2d0ce;
}

.zoom-btn {
  display: grid;
  place-items: center;
  width: 18px;
  height: 20px;
}

.status input {
  appearance: none;
  width: 100px;
  height: 12px;
  background: linear-gradient(#b0b0b0, #b0b0b0) center / 100% 1px no-repeat;
}

.status input::-webkit-slider-thumb {
  appearance: none;
  width: 5px;
  height: 12px;
  background-color: #666;
}

.zoom-value {
  margin-left: 9px;
}
```
FILE: chart.js
```js
const days = [
  [24.3, 3747, '平'], [28.1, 3930, '平'], [29.1, 3936, '平'], [25.2, 3718, '平'],
  [24.5, 3588, '平'], [23.7, 3069, '休'], [20.8, 2817, '休'], [24.8, 3496, '平'],
  [21.8, 3413, '平'], [21.9, 3582, '平'], [22.05, 3620, '平'], [23.5, 3580, '平'],
  [24.0, 3830, '平'], [22.5, 2904, '休'], [25.0, 3226, '海'], [24.8, 3550, '平'],
  [27.3, 3250, '休'], [28.15, 3380, '休'], [28.65, 4032, '平'], [29.5, 3817, '休'],
  [29.2, 4239, '平'], [29.7, 4224, '平'], [31.4, 4100, '休'], [32.3, 3963, '休'],
  [31.4, 4538, '平'], [31.6, 4538, '平'], [32.4, 4815, '平'], [33.1, 4784, '平'],
  [33.6, 5250, '平'], [33.7, 5175, '平'], [34.6, 5340, '平']
];

const svg = document.getElementById('scatter');
const plot = { left: 77, right: 308, top: 46, bottom: 176 };

function px(temp) {
  return plot.left + (temp - 20) / 15 * (plot.right - plot.left);
}

function py(power) {
  return plot.bottom - (power - 2500) / 3000 * (plot.bottom - plot.top);
}

function add(tag, attrs, text) {
  const el = document.createElementNS('http://www.w3.org/2000/svg', tag);
  for (const key in attrs) {
    el.setAttribute(key, attrs[key]);
  }
  if (text) {
    el.textContent = text;
  }
  svg.appendChild(el);
}

function line(x1, y1, x2, y2, cls) {
  add('line', { x1, y1, x2, y2, class: cls });
}

add('text', { x: 165, y: 31, 'text-anchor': 'middle', class: 'chart-title' }, '最高気温と14時の電力');

for (let p = 2500; p <= 5500; p += 500) {
  const y = Math.round(py(p)) + 0.5;
  line(plot.left, y, plot.right, y, 'grid-line');
  add('text', { x: 67, y: y + 3, 'text-anchor': 'end' }, String(p));
}

for (let t = 20; t <= 35; t++) {
  const x = Math.round(px(t)) + 0.5;
  line(x, plot.top, x, plot.bottom, 'grid-line');
  add('text', { x: x - 1, y: 196, 'text-anchor': 'middle' }, String(t));
}

add('text', { x: 190, y: 219, 'text-anchor': 'middle', class: 'axis-title' }, '最高気温（℃）');
add('text', { x: 0, y: 0, 'text-anchor': 'middle', class: 'axis-title', transform: 'translate(32 116) rotate(-90)' }, '14時の電力（万kW）');

line(px(20.8), py(137.49 * 20.8 + 127.52), px(34.6), py(137.49 * 34.6 + 127.52), 'trend');

days.forEach(([temp, power]) => {
  add('circle', { cx: px(temp), cy: py(power), r: 6, class: 'point' });
});

days.forEach(([temp, power, label]) => {
  add('text', { x: px(temp) + 1, y: py(power) + 4, 'text-anchor': 'middle', class: 'point-label' }, label);
});

add('text', { x: 166, y: 95, 'text-anchor': 'middle', class: 'equation' }, 'y = 137.49x + 127.52');
add('text', { x: 166, y: 110, 'text-anchor': 'middle', class: 'equation' }, 'R² = 0.7479');
```
